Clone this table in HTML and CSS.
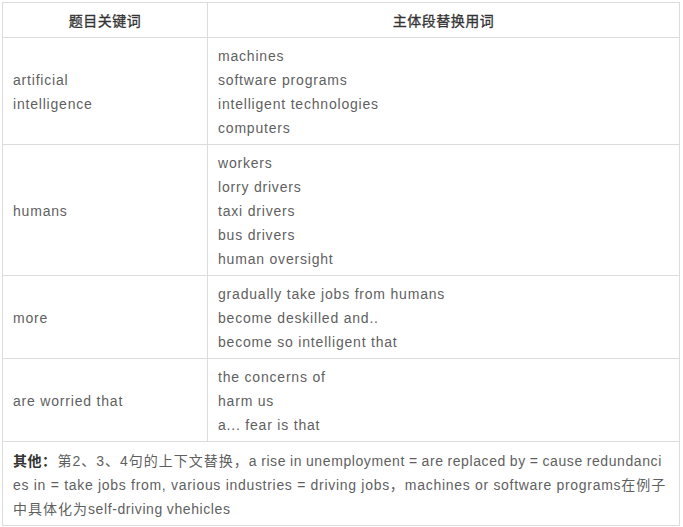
FILE: index.html
```html
<!DOCTYPE html>
<html lang="zh">
<head>
<meta charset="utf-8">
<link rel="stylesheet" href="styles.css">
</head>
<body>
<table class="tbl">
  <colgroup><col class="c1"><col class="c2"></colgroup>
  <thead>
    <tr><th>题目关键词</th><th>主体段替换用词</th></tr>
  </thead>
  <tbody>
    <tr><td>artificial<br>intelligence</td><td>machines<br>software programs<br>intelligent technologies<br>computers</td></tr>
    <tr><td>humans</td><td>workers<br>lorry drivers<br>taxi drivers<br>bus drivers<br>human oversight</td></tr>
    <tr><td>more</td><td>gradually take jobs from humans<br>become deskilled and..<br>become so intelligent that</td></tr>
    <tr><td>are worried that</td><td>the concerns of<br>harm us<br>a... fear is that</td></tr>
    <tr><td colspan="2" class="note"><b class="lbl">其他：</b><span class="zh">第2、3、4句的上下文替换，</span>a rise in unemployment = are replaced by = cause redundanc<span class="wide">ies in = take jobs from, various industries = driving jobs<span class="zh">，</span>machines or software programs</span><span class="zh">在例子中具体化为</span>self-driving vhehicles</td></tr>
  </tbody>
</table>
</body>
</html>
```
FILE: styles.css
```css
html, body { margin: 0; padding: 0; background: #fff; }
body { padding: 2px; }
.tbl {
  border-collapse: collapse;
  width: 678px;
  font-family: "Liberation Sans", "Noto Sans CJK SC", sans-serif;
  font-size: 14px;
  line-height: 24px;
  color: #5f5f5f;
  letter-spacing: 0.8px;
}
.c1 { width: 205px; }
.tbl th, .tbl td {
  border: 1px solid #dcdcdc;
  padding: 6px 10px 4px;
  vertical-align: middle;
  text-align: left;
}
.tbl th {
  padding: 5px 10px;
  text-align: center;
  font-weight: normal;
  color: #333;
  letter-spacing: 0.5px;
  font-family: "Noto Sans CJK SC", sans-serif;
  -webkit-text-stroke: 0.3px #333;
}
.note { word-break: break-all; padding-right: 18px; letter-spacing: 0.6px; word-spacing: -0.6px; }
.lbl { color: #333; font-family: "Noto Sans CJK SC", sans-serif; font-weight: bold; letter-spacing: 0.5px; margin-right: 1px; }
.zh { letter-spacing: 1px; }
.wide { letter-spacing: 0.7px; word-spacing: 0; }
```
